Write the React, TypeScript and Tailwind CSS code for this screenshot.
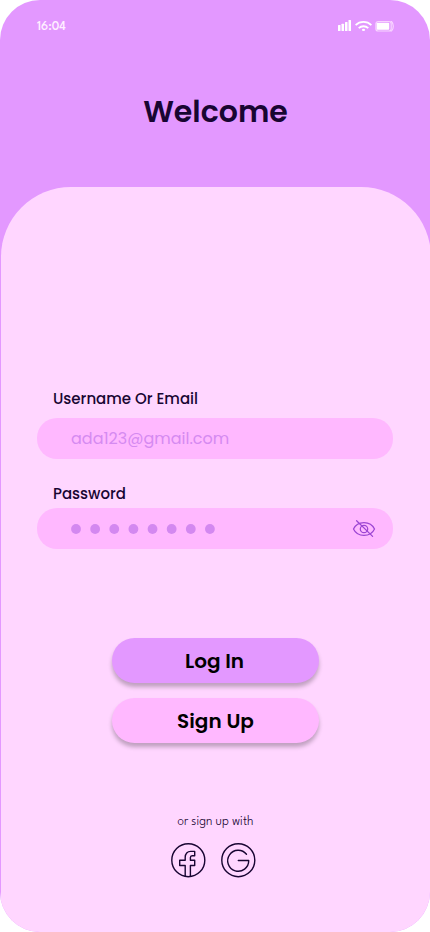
import React from "react";

function StatusBar() {
  return (
    <div className="flex h-[52px] shrink-0 items-center justify-between pl-[37px] pr-[35px]">
      <span className="pt-[3px] font-['League_Spartan','Lato',sans-serif] text-[13px] font-medium leading-none text-[#fff0ff]">16:04</span>
      <div className="flex items-center gap-[3px] text-white">
        <svg width="14" height="12" viewBox="0 0 14 12" fill="currentColor">
          <rect x="0" y="5" width="2.500" height="6" rx="0.5" />
          <rect x="3.500" y="3.700" width="2.500" height="7.300" rx="0.5" />
          <rect x="7" y="2" width="2.500" height="9" rx="0.5" />
          <rect x="10.500" y="0" width="2.500" height="11" rx="0.5" />
        </svg>
        <svg width="17" height="12" viewBox="0 0 17 12" fill="none" stroke="currentColor" strokeWidth="1.8">
          <path d="M0.6 5.1C5 .9 12 .9 16.400 5.1" />
          <path d="M3.700 8.1c2.700-2.500 6.900-2.500 9.600 0" />
          <ellipse cx="8.500" cy="9.900" rx="1.600" ry="1.100" fill="currentColor" stroke="none" />
        </svg>
        <svg width="20" height="12" viewBox="0 0 20 12">
          <path d="M15.500 1.500h1q1.800 1.800 1.800 4.800t-1.800 4.700h-1" fill="none" stroke="#f8d5ff" strokeWidth="1.200" />
          <rect x="0.900" y="1.500" width="15.300" height="9.500" rx="2.300" fill="#e398ff" stroke="#f8d5ff" strokeWidth="1.200" />
          <rect x="1.700" y="2.700" width="12.500" height="7" rx="0.800" fill="white" />
        </svg>
      </div>
    </div>
  );
}

function HiddenEye() {
  return (
    <svg width="24" height="20" viewBox="0 0 24 20" fill="none" stroke="#9c45d3" strokeWidth="1.250" strokeLinecap="round">
      <path d="M1.500 10C3.300 6.100 7.400 3.600 12 3.600s8.700 2.500 10.500 6.400c-1.800 3.900-5.900 6.400-10.500 6.400S3.300 13.900 1.500 10Z" />
      <circle cx="12" cy="10" r="3.700" />
      <path d="m4.600 1.700 16 15.700" />
    </svg>
  );
}

function Facebook() {
  return (
    <svg width="36" height="36" viewBox="0 0 36 36" fill="none" stroke="#180532" strokeWidth="1.400" strokeLinejoin="round">
      <circle cx="18.300" cy="18.200" r="16.500" />
      <path d="M15.200 34.300V23.500H9.700V18.300H15.200V15.300C15.200 11.500 17.400 9.400 20.700 9.400H24.700V13.800H22.100C20.800 13.800 20.400 14.400 20.400 15.600V18.300H24.700V23.500H20.400V34.300" />
    </svg>
  );
}

function Google() {
  return (
    <svg width="36" height="36" viewBox="0 0 36 36" fill="none" stroke="#180532" strokeWidth="1.400">
      <circle cx="18.300" cy="18.200" r="16.500" />
      <path d="M26.500 12.300A10.500 10.500 0 1 0 28.700 18.500H18.300" strokeLinecap="round" strokeLinejoin="round" />
    </svg>
  );
}

export default function App() {
  return (
    <div className="h-[932px] w-[430px] bg-white">
      <main className="flex h-full flex-col overflow-hidden rounded-[40px] bg-[#e398ff] font-['Poppins','Inter',sans-serif]">
        <StatusBar />
        <header className="flex h-[135px] shrink-0 justify-center pl-px pt-[37px]">
          <h1 className="text-[30px] font-semibold leading-[45px] text-[#180532]">Welcome</h1>
        </header>
        <section className="ml-px flex w-[430px] flex-1 flex-col rounded-t-[70px] bg-[#ffd6ff] pt-[199px]">
          <form className="flex flex-col px-9" onSubmit={(e) => e.preventDefault()}>
            <label className="flex h-8 items-start pl-4 text-[15px] font-medium leading-[26px] text-[#180532]">
              <span>Username Or Email</span>
            </label>
            <div className="flex h-[41px] w-[356px] items-center rounded-[20px] bg-[#ffb8ff] pl-[34px] text-base leading-6 text-[#d58af1]">
              <span>ada123@gmail.com</span>
            </div>
            <label className="mt-[22px] flex h-[27px] items-start pl-4 text-[15px] font-medium leading-[26px] text-[#180532]">
              <span>Password</span>
            </label>
            <div className="flex h-[41px] w-[356px] items-center justify-between rounded-[20px] bg-[#ffb8ff] pl-[34.400px] pr-[17px]">
              <svg className="mt-px" width="146" height="10" viewBox="0 0 146 10" fill="#d388f0">
                {Array.from({ length: 8 }, (_, i) => (
                  <circle key={i} cx={5 + i * 19.13} cy="5" r="4.900" />
                ))}
              </svg>
              <HiddenEye />
            </div>
            <div className="mt-[89px] flex flex-col items-center gap-[15px] pr-px">
              <button className="h-[45px] w-[207px] rounded-[23px] bg-[#e398ff] pr-[2px] text-xl font-semibold text-black shadow-[0_4px_4px_rgba(0,0,0,0.25)]">Log In</button>
              <button className="h-[45px] w-[207px] rounded-[23px] bg-[#ffb8ff] text-xl font-semibold text-black shadow-[0_4px_4px_rgba(0,0,0,0.25)]">Sign Up</button>
            </div>
          </form>
          <footer className="mt-[71px] flex flex-col items-center">
            <p className="pr-px font-['League_Spartan','Lato',sans-serif] text-[13px] font-light leading-4 text-[#180532]">or sign up with</p>
            <div className="mt-[12px] flex gap-[14px] pr-[6px]">
              <Facebook />
              <Google />
            </div>
          </footer>
        </section>
      </main>
    </div>
  );
}
